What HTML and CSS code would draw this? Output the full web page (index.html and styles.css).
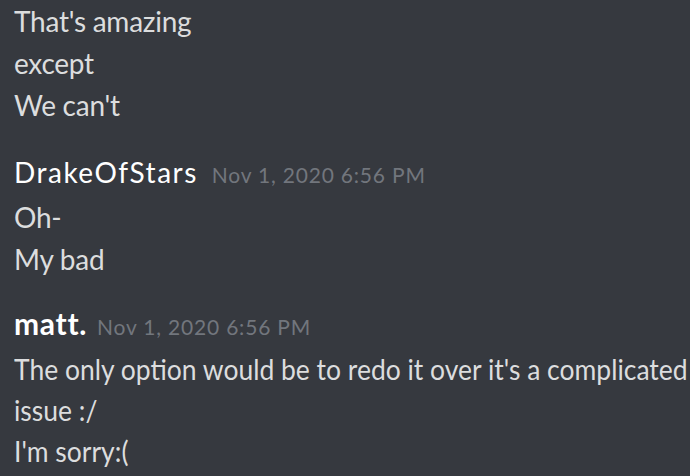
FILE: index.html
```html
<!DOCTYPE html>
<html>
<head>
<meta charset="utf-8">
<link rel="stylesheet" href="styles.css">
</head>
<body>
<div class="chat">
  <div class="group first">
    <div class="line">That's amazing</div>
    <div class="line">except</div>
    <div class="line">We can't</div>
  </div>
  <div class="group">
    <div class="header"><span class="name">DrakeOfStars</span><span class="time">Nov 1, 2020 6:56 PM</span></div>
    <div class="line">Oh-</div>
    <div class="line">My bad</div>
  </div>
  <div class="group squeezed">
    <div class="header tight"><span class="name bold">matt.</span><span class="time">Nov 1, 2020 6:56 PM</span></div>
    <div class="line">The only option would be to redo it over it's a complicated</div>
    <div class="line">issue :/</div>
    <div class="line">I'm sorry:(</div>
  </div>
</div>
</body>
</html>
```
FILE: styles.css
```css
html, body {
  margin: 0;
  padding: 0;
  background: #36393f;
  overflow: hidden;
}
.chat {
  width: 690px;
  height: 476px;
  padding: 0 0 0 14px;
  box-sizing: border-box;
  font-family: "Lato", "Noto Sans", sans-serif;
  color: #dcddde;
}
.group {
  display: flex;
  flex-direction: column;
}
.group + .group {
  margin-top: 25px;
}
.group.squeezed {
  margin-top: 22px;
}
.line {
  font-size: 28px;
  line-height: 42px;
  letter-spacing: -0.25px;
  white-space: nowrap;
}
.header {
  display: flex;
  align-items: baseline;
  gap: 14px;
  line-height: 42px;
  white-space: nowrap;
}
.header.tight {
  gap: 10px;
}
.name {
  font-size: 28px;
  letter-spacing: 1.5px;
  color: #ffffff;
}
.name.bold {
  font-size: 30px;
  font-weight: 700;
  letter-spacing: 0.7px;
}
.time {
  font-size: 21px;
  letter-spacing: 0.8px;
  color: #72767d;
}
.squeezed .line {
  font-size: 29px;
  line-height: 41px;
  letter-spacing: 0;
  transform: scaleX(0.913);
  transform-origin: left center;
}
```
